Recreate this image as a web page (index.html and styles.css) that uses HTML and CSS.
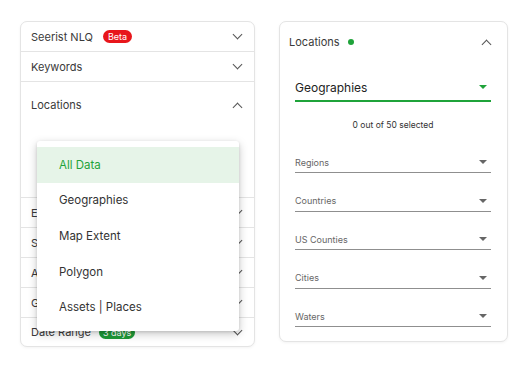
FILE: index.html
```html
<!DOCTYPE html>
<html lang="en">
<head>
<meta charset="UTF-8">
<title>Filters</title>
<link rel="stylesheet" href="styles.css">
</head>
<body>
<div class="page">

  <div class="card card-left">
    <div class="row"><span class="label">Seerist NLQ <span class="badge badge-red">Beta</span></span><span class="chev"></span></div>
    <div class="row"><span class="label">Keywords</span><span class="chev"></span></div>
    <div class="section">
      <div class="row row-open"><span class="label">Locations</span><span class="chev up"></span></div>
      <div class="section-body"></div>
    </div>
    <div class="row"><span class="label">Events</span><span class="chev"></span></div>
    <div class="row"><span class="label">Sources</span><span class="chev"></span></div>
    <div class="row"><span class="label">Attributes</span><span class="chev"></span></div>
    <div class="row"><span class="label">Geo Tags</span><span class="chev"></span></div>
    <div class="row row-last"><span class="label">Date Range <span class="badge badge-green">3 days</span></span><span class="chev"></span></div>

    <div class="menu">
      <div class="menu-item active">All Data</div>
      <div class="menu-item">Geographies</div>
      <div class="menu-item">Map Extent</div>
      <div class="menu-item">Polygon</div>
      <div class="menu-item">Assets | Places</div>
    </div>
  </div>

  <div class="card card-right">
    <div class="head"><span class="label">Locations <span class="dot"></span></span><span class="chev up"></span></div>
    <div class="select main"><span>Geographies</span><span class="tri"></span></div>
    <div class="count">0 out of 50 selected</div>
    <div class="select"><span>Regions</span><span class="tri"></span></div>
    <div class="select"><span>Countries</span><span class="tri"></span></div>
    <div class="select"><span>US Counties</span><span class="tri"></span></div>
    <div class="select"><span>Cities</span><span class="tri"></span></div>
    <div class="select"><span>Waters</span><span class="tri"></span></div>
  </div>

</div>
</body>
</html>
```

FILE: styles.css
```css
:root {
  --green:#1fa33a; --line:#e4e4e4; --text:#3a3a3a;
}
body{margin:0;font-family:Inter,"Liberation Sans",sans-serif;color:var(--text);background:#fff}
.page{display:flex;align-items:flex-start;gap:24px;padding:21px 20px}
.card{border:1px solid var(--line);border-radius:7px;background:#fff;box-shadow:0 1px 3px rgba(0,0,0,.05)}
.card-left{position:relative;width:233px}
.row{display:flex;align-items:center;justify-content:space-between;height:29px;padding:0 11px 0 10px;border-bottom:1px solid var(--line);font-size:11px}
.row-open{height:46px;border-bottom:none}
.row-last{border-bottom:none;height:28px}
.section{border-bottom:1px solid var(--line)}
.section-body{height:69px}
.label{display:flex;align-items:center;gap:8px}
.badge{display:inline-block;font-size:9px;line-height:13px;padding:0 5px;border-radius:7px;color:#fff}
.badge-red{background:#e8161b;margin-left:2px}
.badge-green{background:#1e9a37;padding:0 4px}
.chev{width:6px;height:6px;border-right:1.5px solid #555;border-bottom:1.5px solid #555;transform:translateY(-2px) rotate(45deg);margin-right:2px}
.chev.up{transform:translateY(2px) rotate(-135deg)}
.menu{position:absolute;left:16px;top:119px;width:202px;padding:6px 0;background:#fff;border-radius:3px;box-shadow:0 3px 10px rgba(0,0,0,.22),0 1px 3px rgba(0,0,0,.12)}
.menu-item{height:35.6px;display:flex;align-items:center;padding-left:22px;font-size:11.5px;color:#333}
.menu-item.active{background:#e6f4e8;color:var(--green)}

.card-right{width:229px;padding:0 16px 14px 15px;box-sizing:border-box}
.head{display:flex;align-items:center;justify-content:space-between;height:40px;margin-left:-6px;margin-right:-1px;font-size:11px}
.dot{width:6px;height:6px;border-radius:50%;background:var(--green)}
.select{display:flex;align-items:center;justify-content:space-between;height:20px;margin-top:17.5px;border-bottom:1px solid #8f8f8f;font-size:9px;color:#666;padding-right:4px}
.select.main{height:26px;margin-top:12px;border-bottom:2px solid var(--green);font-size:12px;color:#222}
.tri{width:0;height:0;border-left:4px solid transparent;border-right:4px solid transparent;border-top:4px solid #666}
.main .tri{border-top-color:var(--green)}
.count{text-align:center;font-size:8.5px;line-height:11px;color:#333;margin-top:18px;margin-bottom:21px}
```
